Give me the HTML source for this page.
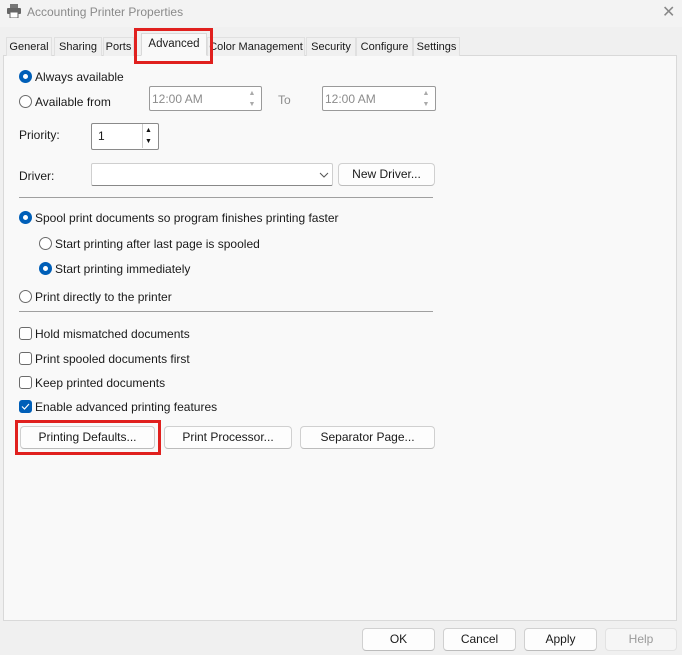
<!DOCTYPE html>
<html><head><meta charset="utf-8"><style>
*{box-sizing:border-box;margin:0;padding:0}
body{width:682px;height:655px;background:#f0f0f0;font-family:"Liberation Sans",sans-serif;font-size:12px;color:#1a1a1a;position:relative;overflow:hidden}
.a{position:absolute;white-space:nowrap}
.title{left:0;top:0;width:682px;height:27px;background:#f3f3f3}
.tab{top:37px;height:19px;border:1px solid #e0e0e0;border-bottom:none;background:#f0f0f0;padding-top:3px;text-align:center;font-size:11px;overflow:hidden}
.panel{left:3px;top:55px;width:674px;height:566px;background:#f9f9f9;border:1px solid #d9d9d9}
.rad{width:13px;height:13px;border-radius:50%;border:1px solid #6b6b6b;background:#fff}
.rad.on{border:4px solid #005fb8;background:#fff}
.chk{width:13px;height:13px;border-radius:3px;border:1px solid #6b6b6b;background:#fff}
.chk.on{background:#005fb8;border-color:#005fb8}
.btn{height:23px;border:1px solid #d0d0d0;border-bottom-color:#bcbcbc;border-radius:4px;background:#fdfdfd;text-align:center;line-height:21px}
.box{background:#fff;border:1px solid #8a8a8a;border-radius:2px}
.dis{color:#8c8c8c;border-color:#9a9a9a}
.sep{height:1px;background:#a0a0a0}
.red{border:3px solid #e0201e}
</style></head><body>
<div class="a title"></div>
<svg class="a" style="left:6px;top:4px" width="16" height="14" viewBox="0 0 16 14"><rect x="4" y="0" width="8" height="4" fill="#777"/><rect x="1" y="4" width="14" height="6" rx="1" fill="#666"/><rect x="4" y="8" width="8" height="6" fill="#fff" stroke="#666"/></svg>
<div class="a" style="left:27px;top:5px;font-size:12px;color:#8a8a8a">Accounting Printer Properties</div>
<div class="a" style="left:662px;top:2px;font-size:16px;color:#888">✕</div>

<div class="a panel"></div>
<div class="a tab" style="left:6px;width:46px">General</div>
<div class="a tab" style="left:54px;width:48px">Sharing</div>
<div class="a tab" style="left:103px;width:31px">Ports</div>
<div class="a tab" style="left:141px;width:66px;top:33px;height:23px;background:#f9f9f9;border-color:#d9d9d9;border-bottom:1px solid #f9f9f9;padding-top:4px;font-size:11.5px">Advanced</div>
<div class="a tab" style="left:207px;width:98px">Color Management</div>
<div class="a tab" style="left:306px;width:50px">Security</div>
<div class="a tab" style="left:356px;width:57px">Configure</div>
<div class="a tab" style="left:413px;width:47px">Settings</div>
<div class="a red" style="left:134px;top:28px;width:79px;height:36px"></div>

<div class="a rad on" style="left:19px;top:70px"></div><div class="a" style="left:35px;top:70px">Always available</div>
<div class="a rad" style="left:19px;top:95px"></div><div class="a" style="left:35px;top:95px">Available from</div>
<div class="a box dis" style="left:149px;top:86px;width:113px;height:25px;padding:5px 2px">12:00 AM</div>
<div class="a" style="left:245px;top:88px;font-size:7px;color:#aaa;line-height:11px;width:14px;text-align:center">▲<br>▼</div>
<div class="a" style="left:278px;top:93px;color:#8c8c8c">To</div>
<div class="a box dis" style="left:322px;top:86px;width:114px;height:25px;padding:5px 2px">12:00 AM</div>
<div class="a" style="left:419px;top:88px;font-size:7px;color:#aaa;line-height:11px;width:14px;text-align:center">▲<br>▼</div>

<div class="a" style="left:19px;top:128px">Priority:</div>
<div class="a box" style="left:91px;top:123px;width:68px;height:27px;padding:5px 6px">1</div>
<div class="a" style="left:142px;top:124px;width:16px;height:24px;border-left:1px solid #ccc"></div>
<div class="a" style="left:145px;top:125px;font-size:7px;color:#111;line-height:11px">▲<br>▼</div>

<div class="a" style="left:19px;top:169px">Driver:</div>
<div class="a box" style="left:91px;top:163px;width:242px;height:23px;border-color:#cfcfcf;border-bottom-color:#888"></div>
<svg class="a" style="left:319px;top:172px" width="10" height="6"><path d="M1 1l4 4 4-4" fill="none" stroke="#555"/></svg>
<div class="a btn" style="left:338px;top:163px;width:97px">New Driver...</div>
<div class="a sep" style="left:19px;top:197px;width:414px"></div>

<div class="a rad on" style="left:19px;top:211px"></div><div class="a" style="left:35px;top:211px">Spool print documents so program finishes printing faster</div>
<div class="a rad" style="left:39px;top:237px"></div><div class="a" style="left:55px;top:237px">Start printing after last page is spooled</div>
<div class="a rad on" style="left:39px;top:262px"></div><div class="a" style="left:55px;top:262px">Start printing immediately</div>
<div class="a rad" style="left:19px;top:290px"></div><div class="a" style="left:35px;top:290px">Print directly to the printer</div>
<div class="a sep" style="left:19px;top:311px;width:414px"></div>

<div class="a chk" style="left:19px;top:327px"></div><div class="a" style="left:35px;top:327px">Hold mismatched documents</div>
<div class="a chk" style="left:19px;top:352px"></div><div class="a" style="left:35px;top:352px">Print spooled documents first</div>
<div class="a chk" style="left:19px;top:376px"></div><div class="a" style="left:35px;top:376px">Keep printed documents</div>
<div class="a chk on" style="left:19px;top:400px"></div>
<svg class="a" style="left:21px;top:403px" width="9" height="7"><path d="M1 3.5l2.5 2.5L8 1" fill="none" stroke="#fff" stroke-width="1.2"/></svg>
<div class="a" style="left:35px;top:400px">Enable advanced printing features</div>

<div class="a btn" style="left:20px;top:426px;width:135px">Printing Defaults...</div>
<div class="a red" style="left:15px;top:420px;width:146px;height:35px"></div>
<div class="a btn" style="left:164px;top:426px;width:128px">Print Processor...</div>
<div class="a btn" style="left:300px;top:426px;width:135px">Separator Page...</div>

<div class="a btn" style="left:362px;top:628px;width:73px">OK</div>
<div class="a btn" style="left:443px;top:628px;width:73px">Cancel</div>
<div class="a btn" style="left:524px;top:628px;width:73px">Apply</div>
<div class="a btn" style="left:605px;top:628px;width:72px;color:#9a9a9a;background:#f6f6f6;border-color:#e2e2e2">Help</div>
</body></html>
